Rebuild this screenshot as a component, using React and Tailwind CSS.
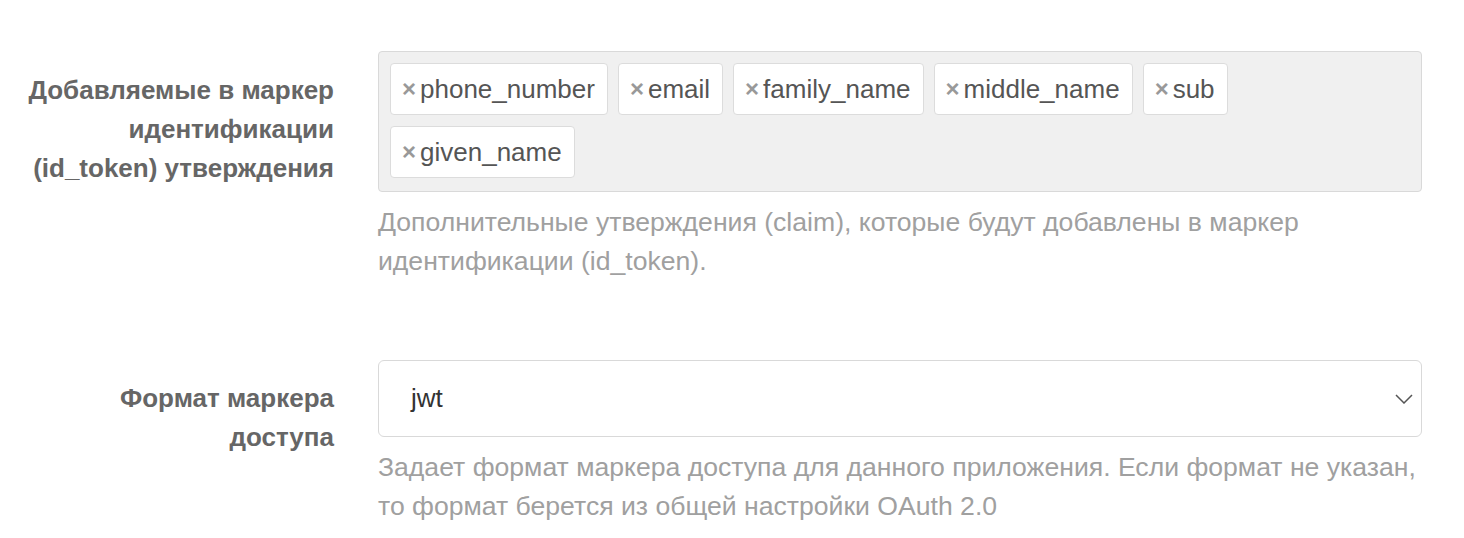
import React from "react";

const tags = ["phone_number", "email", "family_name", "middle_name", "sub", "given_name"];

function Tag({ name }) {
  return (
    <div className="flex h-[52px] items-center rounded-[4px] border border-[#dcdcdc] bg-white pl-[11px] pr-[12px]">
      <span className="mr-[4px] text-[24px] font-bold leading-none text-[#999]">×</span>
      <span className="text-[26px] leading-none text-[#555]">{name}</span>
    </div>
  );
}

export default function App() {
  return (
    <div
      className="min-h-[538px] w-[1464px] bg-white pt-[51px]"
      style={{ fontFamily: '"Liberation Sans", Arial, sans-serif' }}
    >
      <div className="flex">
        <div className="w-[334px] shrink-0 pt-[20px] text-right text-[26px] font-bold leading-[39px] text-[#666]">
          Добавляемые в маркер
          <br />
          идентификации
          <br />
          (id_token) утверждения
        </div>
        <div className="ml-[44px] mr-[42px] flex-1">
          <div className="flex h-[141px] flex-wrap content-start gap-x-[10px] gap-y-[11px] rounded-[4px] border border-[#d9d9d9] bg-[#f0f0f0] p-[11px]">
            {tags.map((t) => (
              <Tag key={t} name={t} />
            ))}
          </div>
          <div className="mt-[11px] text-[26.6px] leading-[39px] text-[#a0a0a0]">
            Дополнительные утверждения (claim), которые будут добавлены в маркер
            <br />
            идентификации (id_token).
          </div>
        </div>
      </div>

      <div className="mt-[79px] flex">
        <div className="w-[334px] shrink-0 pt-[19px] text-right text-[26px] font-bold leading-[39px] text-[#666]">
          Формат маркера
          <br />
          доступа
        </div>
        <div className="ml-[44px] mr-[42px] flex-1">
          <div className="flex h-[77px] items-center justify-between rounded-[6px] border border-[#d9d9d9] bg-white pl-[32px] pr-[8px]">
            <span className="text-[26px] text-[#333]">jwt</span>
            <svg width="18" height="10" viewBox="0 0 18 10" fill="none">
              <path d="M1 1l8 8 8-8" stroke="#555" strokeWidth="1.5" />
            </svg>
          </div>
          <div className="mt-[11px] text-[26.6px] leading-[39px] text-[#a0a0a0]">
            Задает формат маркера доступа для данного приложения. Если формат не указан,
            <br />
            то формат берется из общей настройки OAuth 2.0
          </div>
        </div>
      </div>
    </div>
  );
}
